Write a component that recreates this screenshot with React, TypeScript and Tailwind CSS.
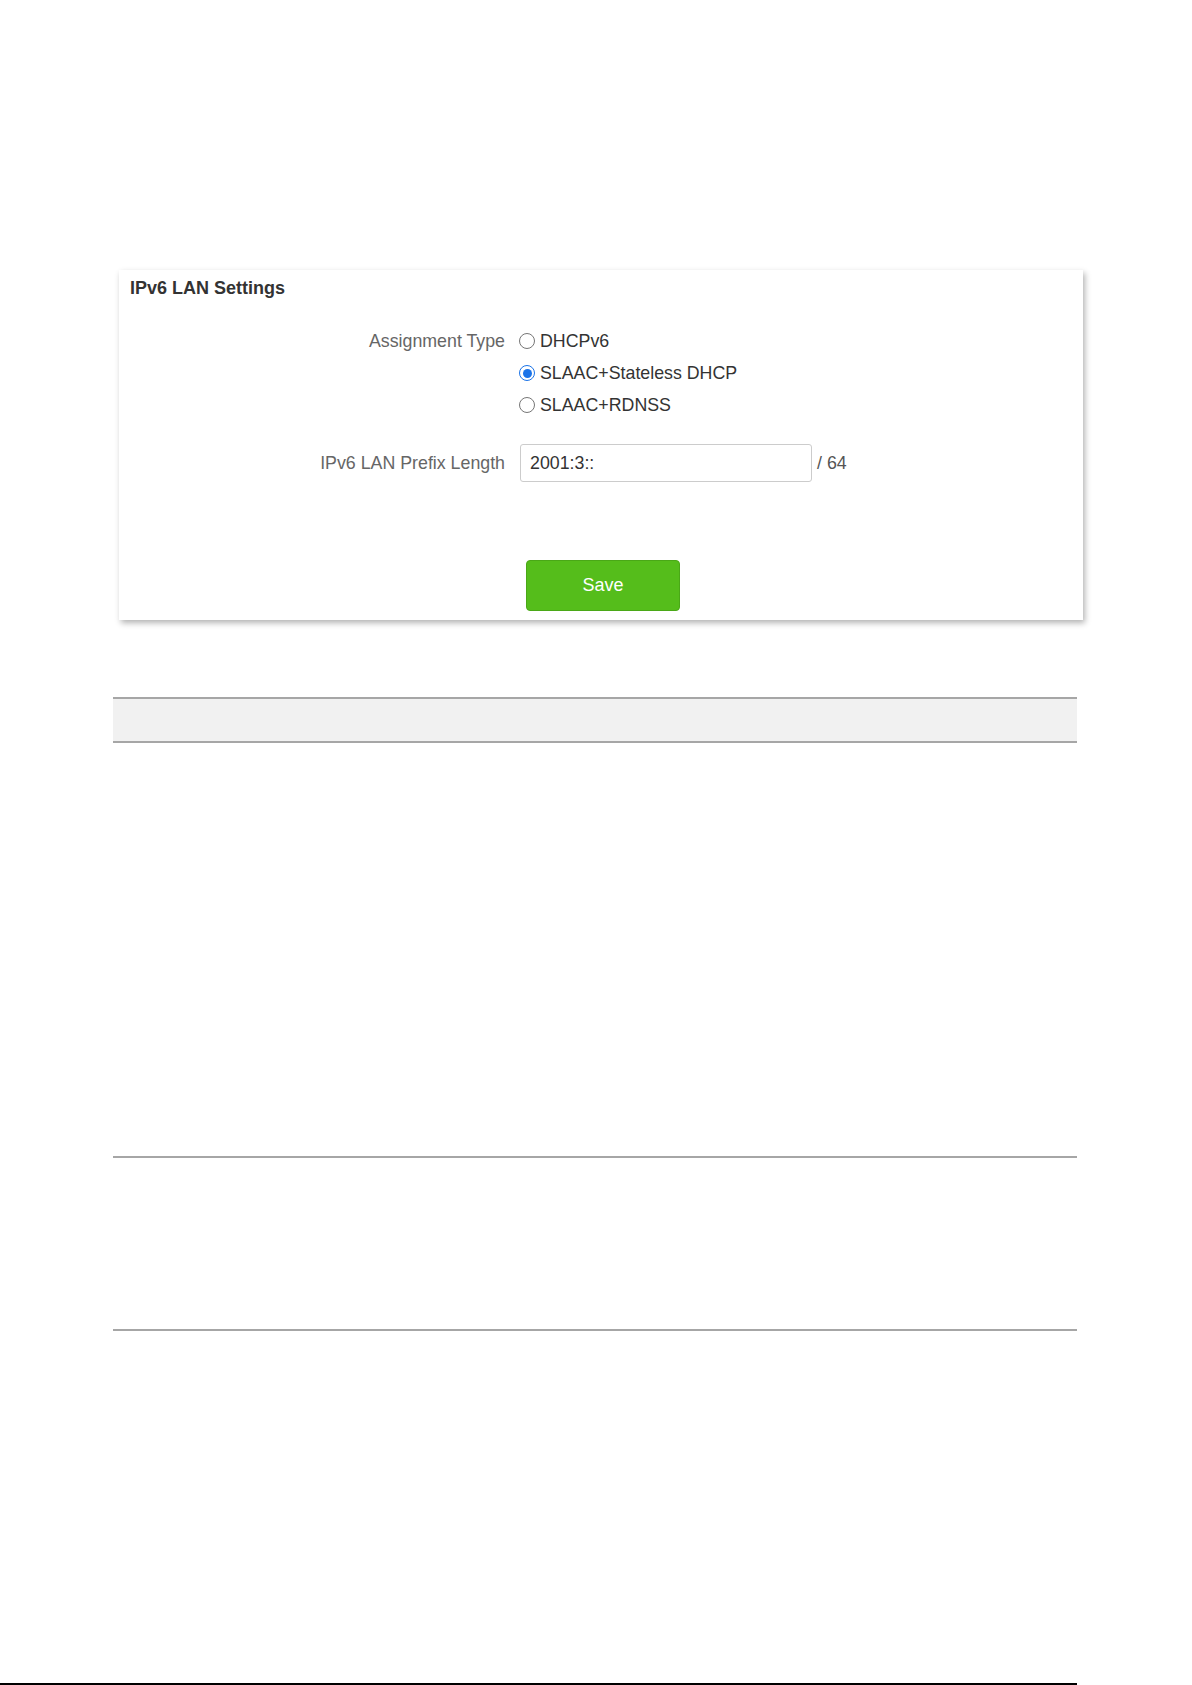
import { useState } from "react"

const font = { fontFamily: '"Liberation Sans", Arial, sans-serif' }

const modes = ["DHCPv6", "SLAAC+Stateless DHCP", "SLAAC+RDNSS"]

function Radio({ checked }: { checked: boolean }) {
  return checked ? (
    <span className="flex h-[16px] w-[16px] shrink-0 items-center justify-center rounded-full border-[1.5px] border-[#1a73e8] bg-white">
      <span className="h-[9px] w-[9px] rounded-full bg-[#1a73e8]" />
    </span>
  ) : (
    <span className="h-[16px] w-[16px] shrink-0 rounded-full border-[1.5px] border-[#767676] bg-white" />
  )
}

export default function App() {
  const [mode, setMode] = useState(1)
  const [prefix, setPrefix] = useState("2001:3::")

  return (
    <div className="flex h-[1685px] w-[1192px] flex-col bg-white" style={font}>
      {/* Settings card */}
      <div className="ml-[119px] mt-[270px] flex h-[350px] w-[964px] flex-col bg-white pl-[11px] pt-[7px] shadow-[2px_3px_6px_rgba(0,0,0,0.3)]">
        <h2 className="text-[18px] font-bold leading-[22px] text-[#333]">IPv6 LAN Settings</h2>

        <div className="mt-[26px] flex">
          <div className="flex h-[32px] w-[375px] items-center justify-end text-[17.8px] leading-[20px] text-[#666]">
            Assignment Type
          </div>
          <div className="ml-[14px] flex flex-col">
            {modes.map((m, i) => (
              <button
                key={m}
                onClick={() => setMode(i)}
                className="flex h-[32px] items-center gap-[5px] text-[17.8px] leading-[20px] text-[#333]"
              >
                <Radio checked={mode === i} />
                <span>{m}</span>
              </button>
            ))}
          </div>
        </div>

        <div className="mt-[23px] flex items-center">
          <div className="w-[375px] text-right text-[17.8px] leading-[20px] text-[#666]">IPv6 LAN Prefix Length</div>
          <input
            value={prefix}
            onChange={(e) => setPrefix(e.target.value)}
            className="ml-[15px] h-[38px] w-[292px] rounded-[3px] border border-[#cccccc] px-[9px] text-[17.8px] text-[#333] outline-none"
          />
          <span className="ml-[5px] text-[17.8px] text-[#555]">/ 64</span>
        </div>

        <button className="ml-[396px] mt-[78px] h-[51px] w-[154px] rounded-[4px] border border-[#4aa817] bg-[#55bd1b] text-[18px] text-white">
          Save
        </button>
      </div>

      {/* Table */}
      <div className="ml-[113px] mt-[77px] w-[964px]">
        <div className="h-[46px] border-y-2 border-[#a6a6a6] bg-[#f1f1f1]" />
        <div className="h-[415px] border-b-2 border-[#a6a6a6]" />
        <div className="h-[173px] border-b-2 border-[#a6a6a6]" />
      </div>

      <div className="mt-auto h-[2px] w-[1077px] bg-black" />
    </div>
  )
}
